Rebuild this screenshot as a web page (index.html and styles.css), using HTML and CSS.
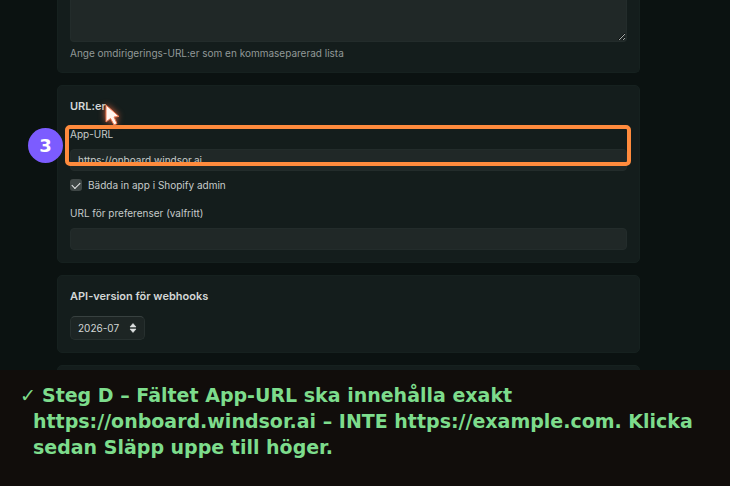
FILE: index.html
```html
<!DOCTYPE html>
<html lang="sv">
<head>
<meta charset="utf-8">
<title>App-URL</title>
<link rel="stylesheet" href="styles.css">
</head>
<body>
<main class="settings">
  <section class="card card-redirects">
    <textarea class="control redirects" aria-describedby="redirect-help" aria-label="Omdirigerings-URL:er"></textarea>
    <p class="help" id="redirect-help">Ange omdirigerings-URL:er som en kommaseparerad lista</p>
  </section>

  <section class="card card-urls">
    <h2 class="title">URL:er
      <svg class="cursor" viewBox="0 0 24 32" aria-hidden="true">
        <path d="M5 5 L5 22 L9.500 18.500 L13 25 L16 23.500 L13 17 L18 16.500 Z" fill="#fff4ee" stroke="#f07850" stroke-width="1" stroke-linejoin="round"/>
      </svg>
    </h2>
    <div class="field field-app">
      <label for="app-url">App-URL</label>
      <input class="control" id="app-url" type="text" value="https://onboard.windsor.ai">
      <div class="highlight"></div>
      <div class="step">3</div>
    </div>
    <label class="check"><input type="checkbox" checked><span>Bädda in app i Shopify admin</span></label>
    <div class="field">
      <label for="pref-url">URL för preferenser (valfritt)</label>
      <input class="control" id="pref-url" type="text">
    </div>
  </section>

  <section class="card card-api">
    <h2 class="title" id="api-title">API-version för webhooks</h2>
    <div class="select">
      <select aria-labelledby="api-title"><option>2026-07</option></select>
      <svg class="arrows" viewBox="0 0 8 10" aria-hidden="true">
        <path d="M1 4 L4 0.500 L7 4 Z M1 6 L4 9.500 L7 6 Z" fill="#dfe2e2" stroke="#dfe2e2" stroke-width="0.600" stroke-linejoin="round"/>
      </svg>
    </div>
  </section>

  <section class="card card-next"></section>
</main>
<footer class="caption">
  <p><span class="tick">✓ </span>Steg D – Fältet App-URL ska innehålla exakt https://onboard.windsor.ai – INTE https://example.com. Klicka sedan Släpp uppe till höger.</p>
</footer>
</body>
</html>
```

FILE: styles.css
```css
* {
  box-sizing: border-box;
}

body {
  margin: 0;
  height: 100vh;
  display: flex;
  flex-direction: column;
  background: #0b1211;
  color: #c6cbca;
  font: 10px/14px Inter, "Liberation Sans", sans-serif;
}

.settings {
  flex: 1;
  min-height: 0;
  overflow: hidden;
  display: flex;
  flex-direction: column;
  gap: 12px;
  padding: 0 90px 0 57px;
}

.card {
  flex: none;
  display: flex;
  flex-direction: column;
  padding: 12px;
  background: #141d1c;
  border: 1px solid #16211f;
  border-radius: 5px;
}

.card-redirects {
  padding-top: 0;
  border-top: 0;
  border-radius: 0 0 5px 5px;
}

.card-urls {
  padding-top: 13px;
  gap: 14px;
}

.card-api {
  padding-top: 13px;
  gap: 13px;
}

.card-next {
  min-height: 40px;
}

.control {
  display: block;
  width: 100%;
  height: 22px;
  margin: 0;
  padding: 0 7px;
  background: #202827;
  border: 1px solid #232c2b;
  border-radius: 4px;
  color: inherit;
  font: inherit;
  outline: 0;
}

.redirects {
  height: 42px;
  border-top: 0;
  border-radius: 0 0 4px 4px;
  resize: vertical;
}

.help {
  margin: 4px 0 0;
  color: #929998;
}

.title {
  position: relative;
  align-self: flex-start;
  margin: 0;
  color: #d3d7d6;
  font-size: 11px;
  line-height: 14px;
  font-weight: 600;
}

.cursor {
  position: absolute;
  left: 31px;
  top: 1px;
  z-index: 2;
  width: 24px;
  height: 32px;
  filter: drop-shadow(0 0 3px #d9603c);
}

.field {
  position: relative;
  display: flex;
  flex-direction: column;
  gap: 8px;
}

.highlight {
  position: absolute;
  inset: -2px -4px 5px -5px;
  border: 4px solid #ff8b3d;
  border-radius: 5px;
  pointer-events: none;
}

.step {
  position: absolute;
  left: -42px;
  top: 1px;
  width: 35px;
  height: 35px;
  border-radius: 50%;
  background: #7c5cff;
  color: #fff;
  font: bold 18px/35px "DejaVu Sans", sans-serif;
  text-align: center;
}

.check {
  display: flex;
  align-items: center;
  gap: 6px;
  margin: -7px 0 0;
}

.check input {
  appearance: none;
  width: 12px;
  height: 12px;
  margin: 0;
  border-radius: 3px;
  background: #3f4746;
  display: grid;
  place-items: center;
}

.check input:checked::before {
  content: "";
  width: 7px;
  height: 4px;
  border: solid #eef0f0;
  border-width: 0 0 1px 1px;
  transform: translateY(-1px) rotate(-45deg);
}

.select {
  position: relative;
  align-self: flex-start;
}

.select select {
  appearance: none;
  display: block;
  width: 75px;
  height: 24px;
  margin: 0;
  padding: 0 7px;
  background: #1d2524;
  border: 1px solid #27302f;
  border-top-color: #384140;
  border-radius: 5px;
  color: #d3d7d6;
  font: inherit;
}

.arrows {
  position: absolute;
  right: 8px;
  top: 7px;
  width: 8px;
  height: 10px;
  pointer-events: none;
}

.caption {
  flex: none;
  padding: 12px 24px 26px 33px;
  background: #110d0b;
  color: #7ddc8c;
  font: bold 19px/26px "DejaVu Sans", sans-serif;
}

.caption p {
  margin: 0;
  text-indent: -13px;
}

.tick {
  font-weight: normal;
}
```
